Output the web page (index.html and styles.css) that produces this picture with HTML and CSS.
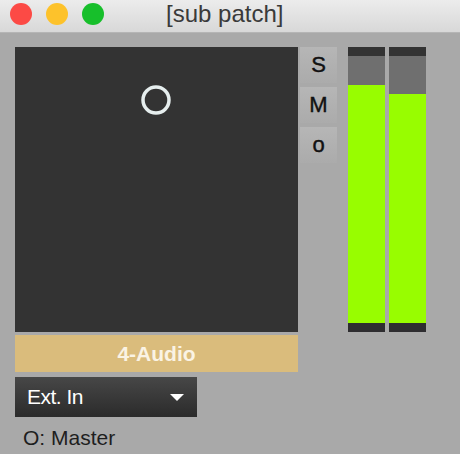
FILE: index.html
```html
<!DOCTYPE html>
<html lang="en">
<head>
  <meta charset="UTF-8" />
  <title>[sub patch]</title>
  <link rel="stylesheet" href="styles.css">
</head>
<body>
  <div class="window">
    <!-- title bar -->
    <div class="titlebar">
      <div class="lights">
        <span class="light red"></span>
        <span class="light yellow"></span>
        <span class="light green"></span>
      </div>
      <div class="title">[sub patch]</div>
    </div>

    <div class="content">
      <div class="top-row">
        <div class="left-col">
          <div class="pad">
            <svg class="knob" width="32" height="32" viewBox="0 0 32 32">
              <circle cx="16" cy="16" r="13" fill="none" stroke="#e6eeee" stroke-width="3.5"/>
            </svg>
          </div>
          <div class="track-name">4-Audio</div>
        </div>

        <div class="buttons">
          <div class="btn">S</div>
          <div class="btn">M</div>
          <div class="btn">o</div>
        </div>

        <div class="meters">
          <div class="meter">
            <div class="cap"></div>
            <div class="empty" style="height: 29px"></div>
            <div class="level"></div>
            <div class="cap bottom"></div>
          </div>
          <div class="meter">
            <div class="cap"></div>
            <div class="empty" style="height: 38px"></div>
            <div class="level"></div>
            <div class="cap bottom"></div>
          </div>
        </div>
      </div>

      <div class="dropdown">
        <span>Ext. In</span>
        <span class="arrow"></span>
      </div>

      <div class="output">O: Master</div>
    </div>
  </div>
</body>
</html>
```

FILE: styles.css
```css
body {
  margin: 0;
  font-family: "Liberation Sans", Arial, sans-serif;
  background-color: #a9a9a9;
}
.window {
  width: 460px;
  height: 454px;
  overflow: hidden;
}
.titlebar {
  height: 32px;
  background: linear-gradient(#ececec, #d8d8d8);
  border-bottom: 1px solid #b5b5b5;
  display: flex;
  align-items: center;
}
.lights {
  display: flex;
  gap: 14px;
  padding-left: 10px;
  margin-top: -4px;
}
.light {
  width: 22px;
  height: 22px;
  border-radius: 50%;
}
.red { background: #fc4a45; }
.yellow { background: #fdc22b; }
.green { background: #17bf2b; }
.title {
  margin-left: 62px;
  margin-top: -4px;
  font-size: 24px;
  color: #3a3a3a;
}
.content {
  padding: 14px 15px 0 15px;
}
.top-row {
  display: flex;
}
.left-col {
  width: 283px;
}
.pad {
  height: 285px;
  background-color: #333333;
  position: relative;
}
.knob {
  position: absolute;
  left: 125px;
  top: 37px;
}
.track-name {
  margin-top: 3px;
  height: 37px;
  line-height: 37px;
  background-color: #dabc7c;
  color: #faf3e4;
  font-weight: bold;
  font-size: 21px;
  text-align: center;
}
.buttons {
  display: flex;
  flex-direction: column;
  gap: 4px;
  margin-left: 2px;
}
.btn {
  width: 37px;
  height: 36px;
  background: linear-gradient(#b6b6b6, #ababab);
  color: #111111;
  font-size: 22px;
  text-align: center;
  line-height: 36px;
  -webkit-text-stroke: 0.4px #111111;
}
.meters {
  display: flex;
  gap: 4px;
  margin-left: 11px;
}
.meter {
  width: 37px;
  height: 285px;
  display: flex;
  flex-direction: column;
}
.cap {
  height: 9px;
  background-color: #333333;
}
.cap.bottom {
  height: 9px;
  background-color: #2e2d30;
}
.empty {
  background-color: #6f6f6f;
}
.level {
  flex: 1;
  background-color: #98fd00;
}
.dropdown {
  margin-top: 5px;
  width: 170px;
  height: 40px;
  padding: 0 0 0 12px;
  background: linear-gradient(#474747, #2b2b2b);
  color: #ffffff;
  font-size: 21px;
  letter-spacing: -0.5px;
  display: flex;
  align-items: center;
  justify-content: space-between;
}
.arrow {
  width: 0;
  height: 0;
  border-left: 7px solid transparent;
  border-right: 7px solid transparent;
  border-top: 7px solid #ffffff;
  margin-right: 13px;
}
.output {
  margin-top: 9px;
  padding-left: 8px;
  font-size: 21px;
  color: #1e1e1e;
}
```
